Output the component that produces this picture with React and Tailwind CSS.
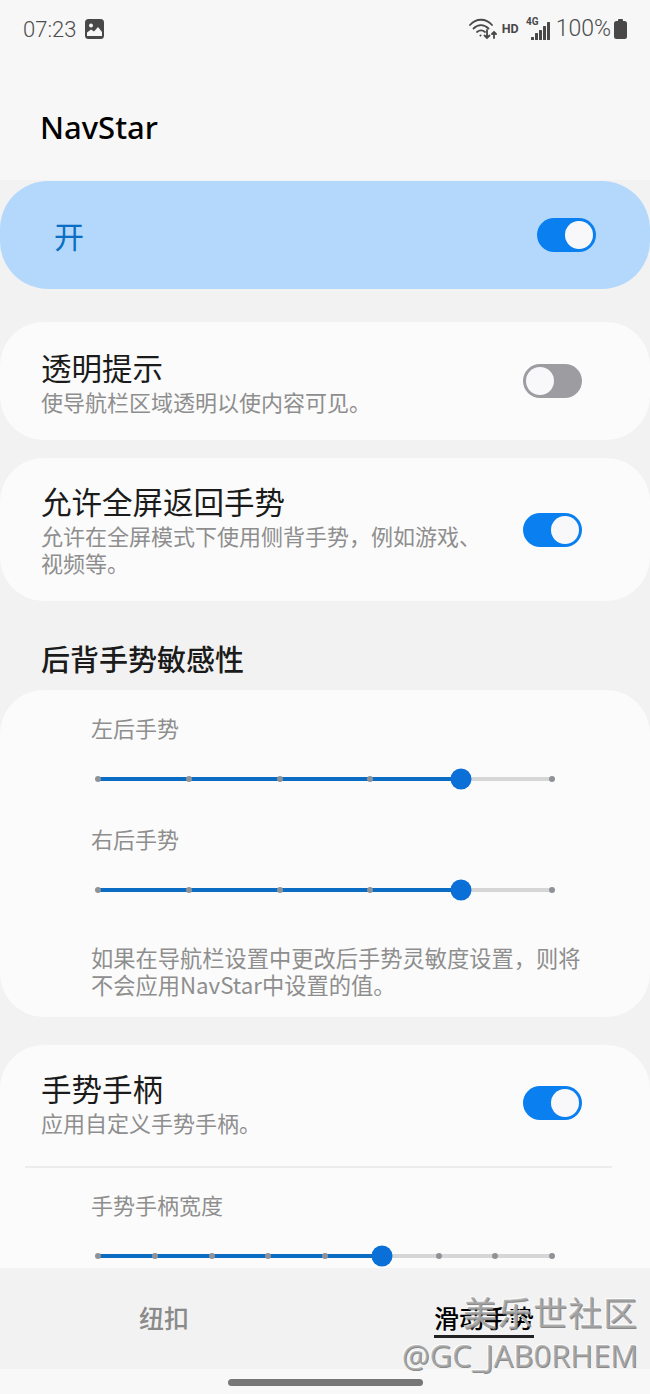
import React from 'react';

const CJK = "font-['Noto_Sans_CJK_SC','Noto_Sans',sans-serif]";

const Toggle = ({ on }) => (
    <div className={`flex items-center w-[59px] h-[34px] rounded-full p-[3px] ${on ? 'bg-[#0a7ff0] justify-end' : 'bg-[#9d9ca1] justify-start'}`}>
        <div className="w-[28px] h-[28px] rounded-full bg-[#f8f8fb]" />
    </div>
);

const Slider = ({ steps, value }) => {
    const pct = (value / (steps - 1)) * 100;
    return (
        <div className="mx-[98px] h-[22px] flex items-center">
            <div className="relative w-full h-[4px] bg-[#d6d6d6] rounded-full">
                <div className="absolute left-0 top-0 h-full bg-[#0b6cc4] rounded-full" style={{ width: `${pct}%` }} />
                <div className="absolute inset-y-0 -inset-x-[3px] flex items-center justify-between">
                    {Array.from({ length: steps }).map((_, i) => (
                        <div key={i} className="w-[6px] h-[6px] rounded-full bg-[#8f9297]" />
                    ))}
                </div>
                <div className="absolute top-1/2 w-[21px] h-[21px] -translate-x-1/2 -translate-y-1/2 rounded-full bg-[#0a6fd6]" style={{ left: `${pct}%` }} />
            </div>
        </div>
    );
};

const ToggleRow = ({ title, desc, on, textClass = '' }) => (
    <div className="w-full flex items-center justify-between pl-[41px] pr-[68px]">
        <div className={`w-[450px] ${textClass}`}>
            <div className="text-[30.500px] leading-[36px] text-[#1b1b1b]">{title}</div>
            <div className="mt-[3px] text-[22px] leading-[27px] text-[#8e8e8e]">{desc}</div>
        </div>
        <Toggle on={on} />
    </div>
);

const App = () => {
    return (
        <div className={`relative w-[650px] h-[1394px] overflow-hidden flex flex-col bg-[#f2f2f2] ${CJK}`}>
            {/* Barra de estado y título */}
            <div className="h-[180px] shrink-0 bg-[#f7f7f7] px-[23px]">
                <div className="flex items-center justify-between h-[58px]">
                    <div className="flex items-center gap-[9px]">
                        <span className="text-[22px] text-[#4c4c4c] font-['Roboto',sans-serif] font-light">07:23</span>
                        <svg width="19" height="20" viewBox="0 0 19 20">
                            <rect width="19" height="20" rx="3.500" fill="#484848" />
                            <circle cx="6" cy="6.500" r="2" fill="#f7f7f7" />
                            <path d="M2 17v-3.500l4-3 3 2 4-4.500 4 5V17z" fill="#f7f7f7" />
                        </svg>
                    </div>
                    <div className="flex items-center">
                        <svg width="28" height="22" viewBox="0 0 28 22" fill="none" stroke="#484848" strokeWidth="1.800" strokeLinecap="round">
                            <path d="M1 7C7 0 17 0 23 7" />
                            <path d="M4.500 10.500C9 6 15 6 19.500 10.500" />
                            <path d="M8 14c2.500-2 5.500-2 8 0" />
                            <circle cx="11.500" cy="17.500" r="1" fill="#484848" stroke="none" />
                            <path d="M18 12v8m-2.500-2.500 2.500 2.500 2.500-2.500" />
                            <path d="M25 20v-6m-2 2 2-2 2 2" />
                        </svg>
                        <span className="ml-[5px] text-[12.500px] font-bold text-[#484848] font-['Roboto',sans-serif]">HD</span>
                        <svg className="ml-[7px]" width="25" height="26" viewBox="0 0 25 26" fill="#484848">
                            <text x="0" y="9" fontSize="10" fontWeight="700" fontFamily="Roboto, sans-serif">4G</text>
                            <rect x="5" y="21" width="3" height="3" rx="0.500" />
                            <rect x="9" y="17" width="3" height="7" rx="0.500" />
                            <rect x="13" y="14" width="3" height="10" rx="0.500" />
                            <rect x="17" y="10" width="3" height="14" rx="0.500" />
                            <rect x="21" y="6" width="3" height="18" rx="0.500" />
                        </svg>
                        <span className="ml-[5px] text-[23px] text-[#4c4c4c] font-['Roboto',sans-serif] font-light">100%</span>
                        <svg className="ml-[3px]" width="13" height="20" viewBox="0 0 13 20" fill="#484848">
                            <rect x="4" y="0" width="5" height="3" rx="1" />
                            <rect x="0" y="2" width="13" height="18" rx="2.500" />
                        </svg>
                    </div>
                </div>
                <div className="mt-[49px] pl-[17px] text-[31px] leading-[40px] font-medium text-black font-['Noto_Sans',sans-serif]">NavStar</div>
            </div>

            {/* Contenido */}
            <div className="flex-1 min-h-0 overflow-hidden pt-[1px]">
                <div className="h-[108px] rounded-[48px] bg-[#b3d8fb] flex items-center justify-between pl-[54px] pr-[54px]">
                    <span className="text-[30px] text-[#0a6fc4]">开</span>
                    <Toggle on />
                </div>

                <div className="mt-[33px] h-[118px] rounded-[44px] bg-[#fbfbfb] flex items-center">
                    <ToggleRow textClass="pt-[1px]" title="透明提示" desc="使导航栏区域透明以使内容可见。" on={false} />
                </div>

                <div className="mt-[18px] h-[143px] rounded-[44px] bg-[#fbfbfb] flex items-center">
                    <ToggleRow title="允许全屏返回手势" desc="允许在全屏模式下使用侧背手势，例如游戏、视频等。" on />
                </div>

                <h2 className="mt-[37px] h-[52px] pl-[41px] text-[29px] leading-[40px] font-medium text-[#1b1b1b]">后背手势敏感性</h2>

                <div className="h-[327px] rounded-[44px] bg-[#fbfbfb] pt-[22px]">
                    <div className="pl-[91px] text-[22px] leading-[30px] text-[#8e8e8e]">左后手势</div>
                    <div className="mt-[26px]"><Slider steps={6} value={4} /></div>
                    <div className="mt-[33px] pl-[91px] text-[22px] leading-[30px] text-[#8e8e8e]">右后手势</div>
                    <div className="mt-[26px]"><Slider steps={6} value={4} /></div>
                    <div className="mt-[43px] pl-[91px] pr-[60px] text-[22.250px] leading-[27px] text-[#8e8e8e]">如果在导航栏设置中更改后手势灵敏度设置，则将不会应用NavStar中设置的值。</div>
                </div>

                <div className="mt-[28px] h-[300px] rounded-t-[44px] bg-[#fbfbfb] pt-[25px]">
                    <ToggleRow title="手势手柄" desc="应用自定义手势手柄。" on />
                    <div className="ml-[25px] mr-[38px] mt-[30px] h-[2px] bg-[#ececec]" />
                    <div className="mt-[21px] pl-[91px] text-[22px] leading-[30px] text-[#8e8e8e]">手势手柄宽度</div>
                    <div className="mt-[26px]"><Slider steps={9} value={5} /></div>
                </div>
            </div>

            {/* Pestañas inferiores */}
            <div className="h-[101px] shrink-0 bg-[#f2f2f2] flex">
                <div className="flex-1 flex justify-center pt-[31px] pl-[4px]">
                    <span className="text-[25px] leading-[36px] font-medium text-[#8a8a8a]">纽扣</span>
                </div>
                <div className="flex-1 flex justify-center pt-[31px] pr-[6px]">
                    <span className="h-[39px] text-[25px] leading-[36px] font-medium text-black border-b-[3px] border-[#222]">滑动手势</span>
                </div>
            </div>
            <div className="h-[25px] shrink-0 bg-[#f8f8f8] flex justify-center pt-[10px]">
                <div className="w-[195px] h-[7px] rounded-full bg-[#777]" />
            </div>

            {/* Marca de agua */}
            <div className="absolute right-[12px] top-[1290px] text-right text-[#a8a8a8]/80 [text-shadow:1px_1px_0_rgba(110,110,110,0.8),-1px_-1px_0_rgba(255,255,255,0.8)]">
                <div className="text-[34px] leading-[44px] tracking-[1px]">美乐世社区</div>
                <div className="mt-[1px] text-[31px] leading-[40px] font-['Open_Sans',sans-serif] whitespace-nowrap">@GC_JAB0RHEM</div>
            </div>
        </div>
    );
};

export default App;
